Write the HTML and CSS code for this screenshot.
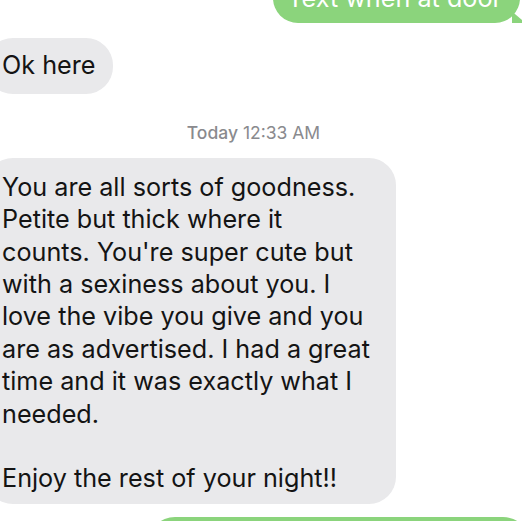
FILE: index.html
```html
<!DOCTYPE html>
<html lang="en">
<head>
  <meta charset="UTF-8" />
  <meta name="viewport" content="width=device-width, initial-scale=1" />
  <title>Messages</title>
  <link rel="stylesheet" href="styles.css">
</head>
<body>
  <div class="thread">
    <div class="row sent">
      <div class="bubble green first">Text when at door</div>
    </div>
    <div class="row received">
      <div class="bubble gray short">Ok here</div>
    </div>
    <div class="stamp"><span class="day">Today</span> 12:33 AM</div>
    <div class="row received">
      <div class="bubble gray long">You are all sorts of goodness. Petite but thick where it counts. You're super cute but with a sexiness about you. I love the vibe you give and you are as advertised. I had a great time and it was exactly what I needed.<br><br>Enjoy the rest of your night!!</div>
    </div>
    <div class="row sent">
      <div class="bubble green last">&nbsp;</div>
    </div>
  </div>
</body>
</html>
```
FILE: styles.css
```css
/* Cropped message thread */
body, html {
  margin: 0;
  height: 100%;
  overflow: hidden;
  background: #fff;
  font-family: Inter, "Liberation Sans", Arial, sans-serif;
}
.thread {
  display: flex;
  flex-direction: column;
  margin: -27px -8px 0 -14px;
}
.row {
  display: flex;
}
.sent {
  justify-content: flex-end;
}
.bubble {
  position: relative;
  font-size: 25.2px;
  line-height: 32.4px;
  padding: 11px 16px;
  border-radius: 27px;
  color: #141414;
}
.gray {
  background: #e9e9eb;
}
.green {
  background: #8bd47c;
  color: #fff;
}
.first {
  margin-right: 10px;
  padding: 9px 18px 9px 14px;
}
/* little tail on the sent bubble */
.first::after {
  content: "";
  position: absolute;
  right: -6px;
  bottom: 0;
  width: 14px;
  height: 12px;
  background: #8bd47c;
  clip-path: polygon(0 0, 100% 100%, 0 100%);
}
.short {
  margin-top: 15px;
  padding: 11px 17px 12px 16px;
}
.stamp {
  text-align: center;
  color: #8a8a8e;
  font-size: 17.5px;
  line-height: 20px;
  margin: 29px 0 0 -9px;
}
.day {
  font-weight: 500;
}
.long {
  width: 373px;
  margin-top: 15px;
  padding: 13px 21px 9px 16px;
}
.last {
  width: 350px;
  margin-top: 13px;
}
```
